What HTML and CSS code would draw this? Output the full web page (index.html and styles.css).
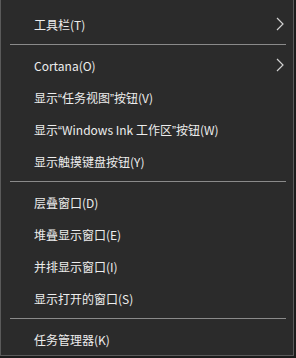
FILE: index.html
```html
<!DOCTYPE html>
<html lang="zh-CN">
<head>
    <meta charset="UTF-8">
    <meta name="viewport" content="width=device-width, initial-scale=1.0">
    <title>任务栏菜单</title>
    <link rel="stylesheet" href="styles.css">
</head>
<body>
    <div class="menu">
        <div class="item">
            <span>工具栏(T)</span>
            <svg class="chevron" width="10" height="14" viewBox="0 0 10 14"><polyline points="2,1 8,7 2,13"/></svg>
        </div>
        <div class="sep"></div>
        <div class="item">
            <span>Cortana(O)</span>
            <svg class="chevron" width="10" height="14" viewBox="0 0 10 14"><polyline points="2,1 8,7 2,13"/></svg>
        </div>
        <div class="item"><span>显示<span class="q">“</span>任务视图<span class="q">”</span>按钮(V)</span></div>
        <div class="item"><span>显示<span class="q">“</span>Windows Ink 工作区<span class="q">”</span>按钮(W)</span></div>
        <div class="item"><span>显示触摸键盘按钮(Y)</span></div>
        <div class="sep"></div>
        <div class="item"><span>层叠窗口(D)</span></div>
        <div class="item"><span>堆叠显示窗口(E)</span></div>
        <div class="item"><span>并排显示窗口(I)</span></div>
        <div class="item"><span>显示打开的窗口(S)</span></div>
        <div class="sep"></div>
        <div class="item"><span>任务管理器(K)</span></div>
    </div>
</body>
</html>
```

FILE: styles.css
```css
body {
    margin: 0;
    background-color: #1c1c1c;
    font-family: "Noto Sans CJK SC", "Noto Sans", sans-serif;
    font-size: 12px;
}
.menu {
    width: 292px;
    padding-top: 8px;
    background-color: #2b2b2b;
    border: 1px solid #5a5a5a;
    border-top: none;
    color: #ededed;
}
.item {
    display: flex;
    justify-content: space-between;
    align-items: center;
    height: 32px;
    padding: 0 8px 0 33px;
}
/* narrow latin quotes, like the system font */
.q {
    font-family: "Liberation Sans", sans-serif;
}
.chevron {
    fill: none;
    stroke: #d0d0d0;
    stroke-width: 1.2;
}
.sep {
    height: 1px;
    margin: 4px 7px 4px 9px;
    background-color: #8a8a8a;
}
```
